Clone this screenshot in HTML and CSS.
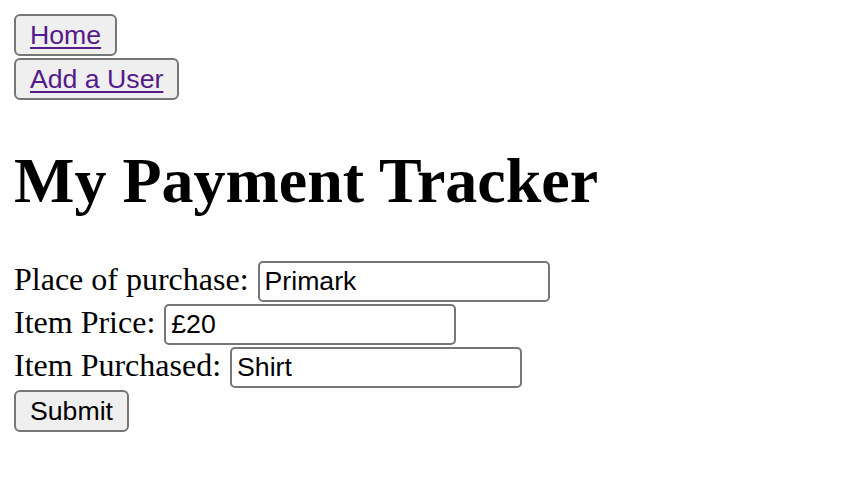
FILE: index.html
```html
<!DOCTYPE html>
<html>
<head>
<meta charset="utf-8">
<title>My Payment Tracker</title>
<link rel="stylesheet" href="styles.css">
</head>
<body>
<nav class="nav">
  <button class="btn" type="button"><a class="link" href="#">Home</a></button>
  <button class="btn" type="button"><a class="link" href="#">Add a User</a></button>
</nav>
<h1 class="title">My Payment Tracker</h1>
<form class="form">
  <div class="row"><label class="label" for="place">Place of purchase:</label><input class="field" id="place" type="text" value="Primark"></div>
  <div class="row"><label class="label" for="price">Item Price:</label><input class="field" id="price" type="text" value="£20"></div>
  <div class="row"><label class="label" for="item">Item Purchased:</label><input class="field" id="item" type="text" value="Shirt"></div>
  <div class="row"><button class="btn" type="submit">Submit</button></div>
</form>
</body>
</html>
```
FILE: styles.css
```css
html, body {
  background: #ffffff;
}
body {
  margin: 0;
  padding: 14px 0 0 14px;
  font-family: "Liberation Serif", "Times New Roman", serif;
  font-size: 32px;
  color: #000000;
}
.nav {
  display: flex;
  flex-direction: column;
  align-items: flex-start;
  gap: 2px;
}
.btn {
  box-sizing: border-box;
  height: 42px;
  padding: 0 14px;
  margin: 0;
  border: 2px solid #767676;
  border-radius: 6px;
  background: #efefef;
  font-family: "Liberation Sans", Arial, sans-serif;
  font-size: 26.67px;
  line-height: 30px;
  color: #000000;
}
.link {
  color: #551a8b;
  text-decoration: underline;
  text-decoration-thickness: 2px;
  text-underline-offset: 3px;
}
.title {
  margin: 44px 0 0 0;
  font-size: 64px;
  line-height: 74px;
  font-weight: bold;
}
.form {
  margin: 43px 0 0 0;
  display: flex;
  flex-direction: column;
  gap: 2px;
}
.row {
  display: flex;
  align-items: baseline;
  gap: 9px;
}
.field {
  box-sizing: border-box;
  width: 292px;
  height: 41px;
  margin: 0;
  padding: 3px 5px;
  border: 2px solid #767676;
  border-radius: 5px;
  background: #ffffff;
  font-family: "Liberation Sans", Arial, sans-serif;
  font-size: 26.67px;
  color: #000000;
}
```
